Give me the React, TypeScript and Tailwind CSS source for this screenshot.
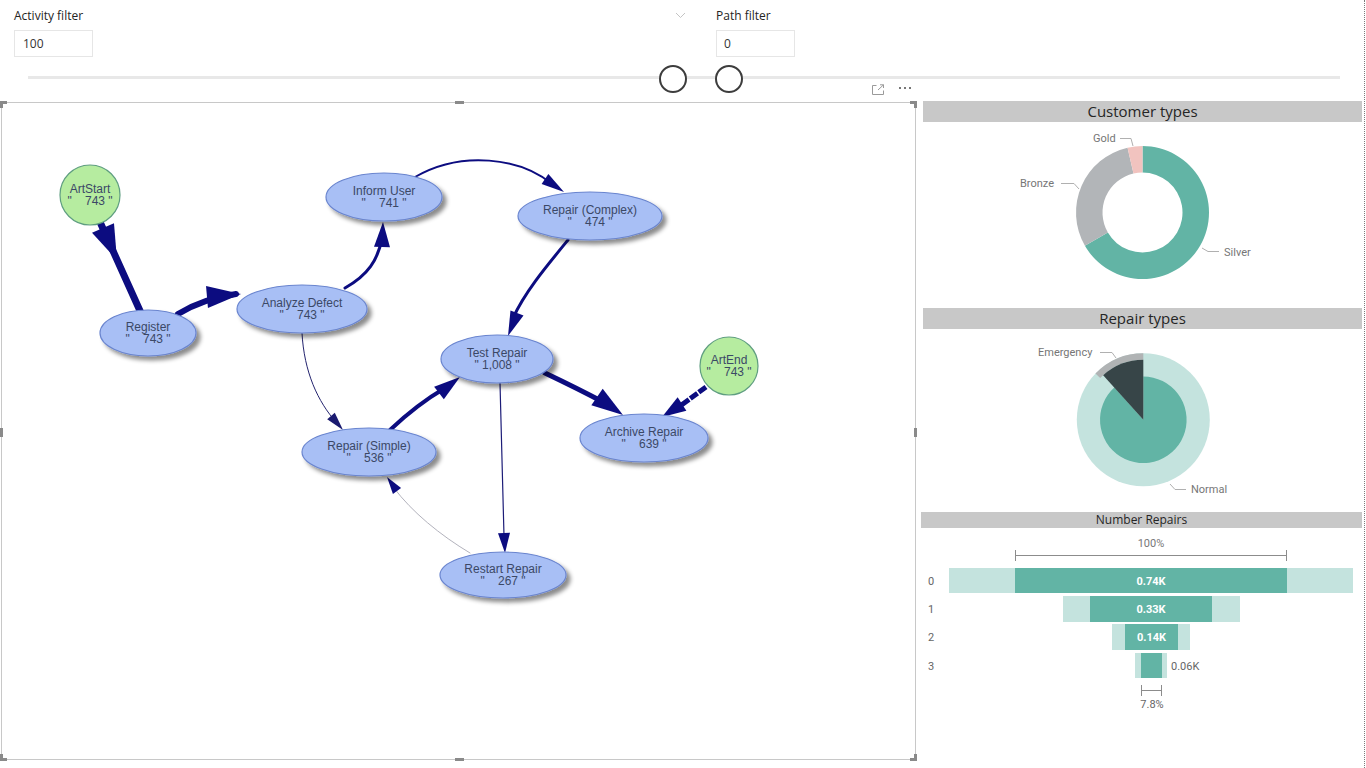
import React from "react";

const TEAL = "#62b4a5";
const LIGHT = "#c4e3de";
const NAVY = "#0c0c80";

function pt(cx: number, cy: number, r: number, a: number): [number, number] {
  const rad = (a * Math.PI) / 180;
  return [cx + r * Math.sin(rad), cy - r * Math.cos(rad)];
}

function arc(cx: number, cy: number, r0: number, r1: number, a0: number, a1: number): string {
  const large = a1 - a0 > 180 ? 1 : 0;
  const [x0, y0] = pt(cx, cy, r1, a0);
  const [x1, y1] = pt(cx, cy, r1, a1);
  if (r0 === 0) {
    return `M${cx},${cy} L${x0},${y0} A${r1},${r1} 0 ${large} 1 ${x1},${y1} Z`;
  }
  const [x2, y2] = pt(cx, cy, r0, a1);
  const [x3, y3] = pt(cx, cy, r0, a0);
  return `M${x0},${y0} A${r1},${r1} 0 ${large} 1 ${x1},${y1} L${x2},${y2} A${r0},${r0} 0 ${large} 0 ${x3},${y3} Z`;
}

function head(tx: number, ty: number, bx: number, by: number, hw: number): string {
  const dx = tx - bx;
  const dy = ty - by;
  const L = Math.hypot(dx, dy);
  const nx = -dy / L;
  const ny = dx / L;
  return `${tx},${ty} ${bx + nx * hw},${by + ny * hw} ${bx - nx * hw},${by - ny * hw}`;
}

type Node = { cx: number; cy: number; rx: number; ry: number; name: string; val: string; green?: boolean };

const nodes: Node[] = [
  { cx: 90, cy: 195, rx: 30, ry: 30, name: "ArtStart", val: '"    743 "', green: true },
  { cx: 148, cy: 333, rx: 48, ry: 23, name: "Register", val: '"    743 "' },
  { cx: 302, cy: 309, rx: 65, ry: 24, name: "Analyze Defect", val: '"    743 "' },
  { cx: 384, cy: 197, rx: 58, ry: 24, name: "Inform User", val: '"    741 "' },
  { cx: 590, cy: 216, rx: 72, ry: 24, name: "Repair (Complex)", val: '"    474 "' },
  { cx: 497, cy: 359, rx: 56, ry: 24, name: "Test Repair", val: '" 1,008 "' },
  { cx: 729, cy: 366, rx: 29, ry: 29, name: "ArtEnd", val: '"    743 "', green: true },
  { cx: 644, cy: 438, rx: 64, ry: 24, name: "Archive Repair", val: '"    639 "' },
  { cx: 369, cy: 452, rx: 67, ry: 24, name: "Repair (Simple)", val: '"    536 "' },
  { cx: 503, cy: 575, rx: 63, ry: 23, name: "Restart Repair", val: '"    267 "' },
];

function ProcessGraph() {
  return (
    <svg width={913} height={656} viewBox="2 103 913 656" className="block">
      <defs>
        <filter id="sh" x="-30%" y="-30%" width="160%" height="170%">
          <feDropShadow dx="4" dy="4" stdDeviation="2.2" floodColor="#000" floodOpacity="0.45" />
        </filter>
      </defs>
      <g fill="none" strokeLinecap="round">
        <path d="M100,222 L141,313" stroke={NAVY} strokeWidth={7} />
        <path d="M178,314 C196,303 214,297 236,294" stroke={NAVY} strokeWidth={6} />
        <path d="M345,288 C368,275 378,260 382,238" stroke={NAVY} strokeWidth={3} />
        <path d="M415,177 C462,150 520,158 552,184" stroke={NAVY} strokeWidth={2} />
        <path d="M568,240 C545,268 525,292 513,318" stroke={NAVY} strokeWidth={3} />
        <path d="M302,333 C304,372 318,402 336,422" stroke="#23236e" strokeWidth={1} />
        <path d="M390,430 C410,411 428,398 445,388" stroke={NAVY} strokeWidth={4} />
        <path d="M545,373 C568,384 588,394 603,402" stroke={NAVY} strokeWidth={5} />
        <path d="M706,387 L676,409" stroke={NAVY} strokeWidth={5} strokeDasharray="9 1.5" strokeLinecap="butt" />
        <path d="M500,383 L504,536" stroke="#1c1c78" strokeWidth={1.2} />
        <path d="M470,553 C440,535 412,512 394,488" stroke="#a9a9b4" strokeWidth={0.9} />
      </g>
      <g fill={NAVY}>
        <polygon points={head(117, 260, 103, 228, 12)} />
        <polygon points={head(241, 294, 207, 297, 11)} />
        <polygon points={head(383, 222, 382, 247, 8)} />
        <polygon points={head(564, 192, 545, 179, 6)} />
        <polygon points={head(508, 336, 517, 313, 7)} />
        <polygon points={head(343, 430, 331, 416, 5)} fill="#1a1a70" />
        <polygon points={head(460, 377, 439, 393, 8)} />
        <polygon points={head(623, 415, 597, 397, 10)} />
        <polygon points={head(662, 417, 682, 404, 8)} />
        <polygon points={head(505, 553, 504, 533, 6)} />
        <polygon points={head(387, 477, 397, 491, 5)} />
      </g>
      {nodes.map((n) => (
        <g key={n.name}>
          <ellipse
            cx={n.cx}
            cy={n.cy}
            rx={n.rx}
            ry={n.ry}
            fill={n.green ? "#b6eca0" : "#a8bff5"}
            stroke={n.green ? "#5f9e80" : "#6a85cf"}
            strokeWidth={1.2}
            filter={n.green ? undefined : "url(#sh)"}
          />
          <text
            x={n.cx}
            y={n.cy - 2}
            textAnchor="middle"
            fontFamily="'Liberation Sans', Arial, sans-serif"
            fontSize={12}
            fill="#3b4866"
            className="whitespace-pre"
          >
            {n.name}
          </text>
          <text
            x={n.cx}
            y={n.cy + 10}
            textAnchor="middle"
            fontFamily="'Liberation Sans', Arial, sans-serif"
            fontSize={12}
            fill="#3b4866"
            className="whitespace-pre"
          >
            {n.val}
          </text>
        </g>
      ))}
    </svg>
  );
}

function Header({ title, big }: { title: string; big?: boolean }) {
  return (
    <div
      className={
        big
          ? "ml-[2px] h-[21px] bg-[#c8c8c8] flex items-center justify-center text-[15px] text-[#252525] leading-none"
          : "h-[16px] bg-[#c8c8c8] flex items-center justify-center text-[12px] text-[#252525] leading-none"
      }
    >
      {title}
    </div>
  );
}

const labelFont = "'Roboto', 'Open Sans', sans-serif";

function CustomerTypes() {
  const cx = 1142.5;
  const cy = 212.5;
  return (
    <svg width={441} height={186} viewBox="921 122 441 186" className="block">
      <path d={arc(cx, cy, 40, 66.5, 0, 240)} fill={TEAL} />
      <path d={arc(cx, cy, 40, 66.5, 240, 347)} fill="#b2b5b8" />
      <path d={arc(cx, cy, 40, 66.5, 347, 360)} fill="#f1c3bf" />
      <g fill="none" stroke="#b0b0b0" strokeWidth={1}>
        <path d="M1120,138.5 H1131 L1133,146" />
        <path d="M1061,183.5 H1074 L1079,189" />
        <path d="M1202,248 L1208,251.5 H1219" />
      </g>
      <g fontFamily={labelFont} fontSize={11} fill="#767676">
        <text x={1093} y={142}>Gold</text>
        <text x={1020} y={187}>Bronze</text>
        <text x={1224} y={256}>Silver</text>
      </g>
    </svg>
  );
}

function RepairTypes() {
  const cx = 1143.3;
  const cy = 419.8;
  return (
    <svg width={441} height={183} viewBox="921 329 441 183" className="block">
      <circle cx={cx} cy={cy} r={66.5} fill={LIGHT} />
      <path d={arc(cx, cy, 60, 66.5, 314, 360)} fill="#b0b3b4" />
      <path d={arc(cx, cy, 0, 43.3, 0, 318)} fill={TEAL} />
      <path d={arc(cx, cy, 0, 60, 318, 360)} fill="#374548" />
      <g fill="none" stroke="#b0b0b0" strokeWidth={1}>
        <path d="M1100,352.5 H1112 L1116,358" />
        <path d="M1170,484 L1175,489.5 H1186" />
      </g>
      <g fontFamily={labelFont} fontSize={11} fill="#767676">
        <text x={1038} y={356}>Emergency</text>
        <text x={1191} y={493}>Normal</text>
      </g>
    </svg>
  );
}

const funnelRows = [
  { y: 568, h: 25, l0: 949, l1: 1353, d0: 1015, d1: 1287, label: "0.74K", cat: "0" },
  { y: 596, h: 26, l0: 1063, l1: 1240, d0: 1090, d1: 1212, label: "0.33K", cat: "1" },
  { y: 624, h: 26, l0: 1112, l1: 1190, d0: 1125, d1: 1178, label: "0.14K", cat: "2" },
  { y: 653, h: 25, l0: 1135, l1: 1167, d0: 1141, d1: 1162, label: "", cat: "3" },
];

function NumberRepairs() {
  return (
    <svg width={441} height={200} viewBox="921 528 441 200" className="block">
      <g fontFamily={labelFont} fontSize={11} fill="#777">
        <text x={1151} y={547} textAnchor="middle">100%</text>
      </g>
      <g stroke="#8c8c8c" strokeWidth={1}>
        <line x1={1015} y1={555.5} x2={1287} y2={555.5} />
        <line x1={1015.5} y1={550} x2={1015.5} y2={561} />
        <line x1={1286.5} y1={550} x2={1286.5} y2={561} />
        <line x1={1141} y1={690.5} x2={1162} y2={690.5} />
        <line x1={1141.5} y1={685} x2={1141.5} y2={696} />
        <line x1={1161.5} y1={685} x2={1161.5} y2={696} />
      </g>
      {funnelRows.map((r) => (
        <g key={r.cat}>
          <rect x={r.l0} y={r.y} width={r.l1 - r.l0} height={r.h} fill={LIGHT} />
          <rect x={r.d0} y={r.y} width={r.d1 - r.d0} height={r.h} fill={TEAL} />
          <text x={928} y={r.y + r.h / 2 + 4} fontFamily={labelFont} fontSize={11} fill="#666">
            {r.cat}
          </text>
          {r.label && (
            <text
              x={(r.d0 + r.d1) / 2}
              y={r.y + r.h / 2 + 4}
              textAnchor="middle"
              fontFamily={labelFont}
              fontSize={11}
              fontWeight={700}
              fill="#fff"
            >
              {r.label}
            </text>
          )}
        </g>
      ))}
      <g fontFamily={labelFont} fontSize={11} fill="#666">
        <text x={1171} y={670}>0.06K</text>
        <text x={1152} y={708} textAnchor="middle">7.8%</text>
      </g>
    </svg>
  );
}

function Handle({ className }: { className: string }) {
  return <div className={"absolute bg-[#8a8a8a] " + className} />;
}

export default function App() {
  return (
    <div className="w-[1366px] h-[768px] bg-white overflow-hidden font-['Open_Sans','Noto_Sans',sans-serif] text-[#252423]">
      <div className="w-[1365px] h-[768px] border-r border-dotted border-[#7a7a7a] flex flex-col">
        <div className="flex h-[64px] pt-[8px] shrink-0">
          <div className="w-[666px] pl-[14px] flex flex-col">
            <div className="text-[12px] leading-[16px]">Activity filter</div>
            <div className="mt-[6px] w-[79px] h-[27px] border border-[#e6e6e6] flex items-center pl-[8px] text-[12px] text-[#333]">
              100
            </div>
          </div>
          <div className="w-[50px] pl-[9px] pt-[3px]">
            <svg width={11} height={8} viewBox="0 0 11 8">
              <path d="M1 2 L5.5 6.5 L10 2" fill="none" stroke="#c4c4c4" strokeWidth={1} />
            </svg>
          </div>
          <div className="flex flex-col">
            <div className="text-[12px] leading-[16px]">Path filter</div>
            <div className="mt-[6px] w-[79px] h-[27px] border border-[#e6e6e6] flex items-center pl-[7px] text-[12px] text-[#333]">
              0
            </div>
          </div>
        </div>
        <div className="relative h-[30px] shrink-0">
          <div className="ml-[28px] mt-[12px] w-[1312px] h-[3px] bg-[#e8e8e8]" />
          <div className="absolute left-[659px] top-[1px] w-[28px] h-[28px] rounded-full border-2 border-[#3d3d3d] bg-white" />
          <div className="absolute left-[715px] top-[1px] w-[28px] h-[28px] rounded-full border-2 border-[#3d3d3d] bg-white" />
        </div>
        <div className="flex items-start">
          <div className="relative ml-[1px] mt-[8px] w-[915px] h-[658px] border border-[#c8c8c8]">
            <div className="absolute top-[-19px] right-[30px] w-[14px] h-[12px]">
              <svg width={14} height={12} viewBox="0 0 14 12">
                <path d="M5.5 1.5 H1.5 V10.5 H12.5 V6.5" fill="none" stroke="#9a9a9a" strokeWidth={1} />
                <path d="M7 6 L12.5 0.8 M9 0.8 H12.5 V4" fill="none" stroke="#9a9a9a" strokeWidth={1} />
              </svg>
            </div>
            <div className="absolute top-[-16px] right-[4px] flex gap-[3px]">
              <div className="w-[2px] h-[2px] bg-[#777]" />
              <div className="w-[2px] h-[2px] bg-[#777]" />
              <div className="w-[2px] h-[2px] bg-[#777]" />
            </div>
            <ProcessGraph />
            <Handle className="left-[-2px] top-[-2px] w-[7px] h-[3px]" />
            <Handle className="left-[-2px] top-[-2px] w-[3px] h-[7px]" />
            <Handle className="right-[-2px] top-[-2px] w-[7px] h-[3px]" />
            <Handle className="right-[-2px] top-[-2px] w-[3px] h-[7px]" />
            <Handle className="left-[-2px] bottom-[-2px] w-[7px] h-[3px]" />
            <Handle className="left-[-2px] bottom-[-2px] w-[3px] h-[7px]" />
            <Handle className="right-[-2px] bottom-[-2px] w-[7px] h-[3px]" />
            <Handle className="right-[-2px] bottom-[-2px] w-[3px] h-[7px]" />
            <Handle className="left-[453px] top-[-2px] w-[9px] h-[3px]" />
            <Handle className="left-[453px] bottom-[-2px] w-[9px] h-[3px]" />
            <Handle className="left-[-2px] top-[325px] w-[3px] h-[9px]" />
            <Handle className="right-[-2px] top-[325px] w-[3px] h-[9px]" />
          </div>
          <div className="ml-[5px] mt-[7px] w-[441px] flex flex-col">
            <Header title="Customer types" big />
            <CustomerTypes />
            <Header title="Repair types" big />
            <RepairTypes />
            <Header title="Number Repairs" />
            <NumberRepairs />
          </div>
        </div>
      </div>
    </div>
  );
}
